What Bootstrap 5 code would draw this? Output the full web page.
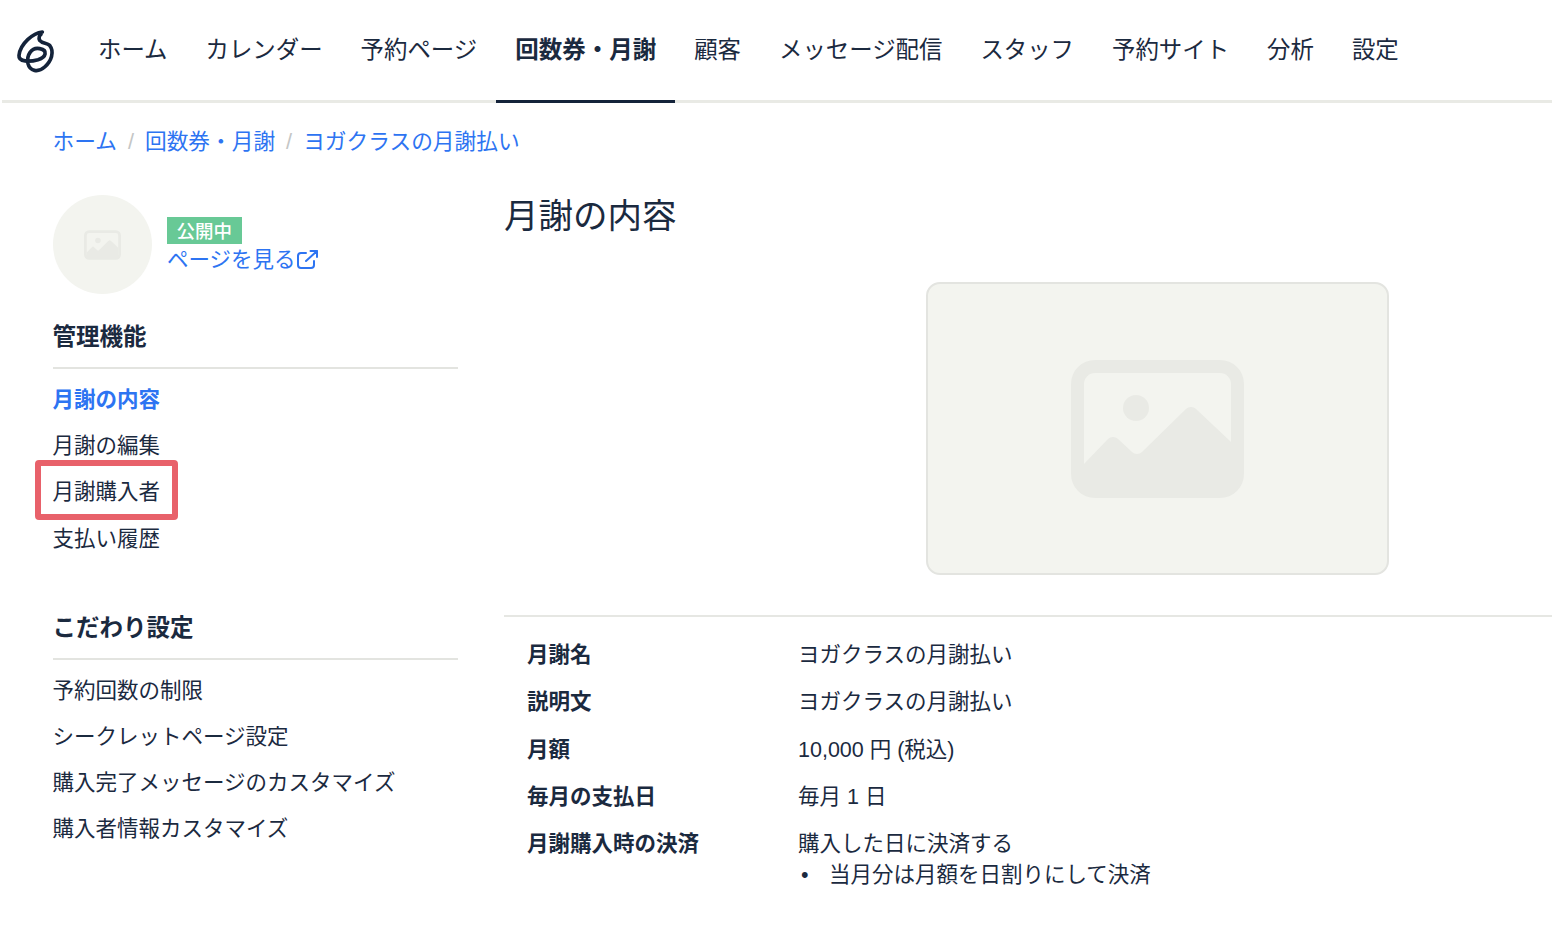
<!DOCTYPE html>
<html lang="ja">
<head>
<meta charset="utf-8">
<title>月謝の内容</title>
<link href="https://cdn.jsdelivr.net/npm/bootstrap@5.3.0/dist/css/bootstrap.min.css" rel="stylesheet">
<style>
body{font-family:"Liberation Sans","Noto Sans CJK JP",sans-serif;color:#1b2a3f;font-size:21.5px;line-height:1.45;background:#fff;overflow-x:hidden}
a{color:#2d74f2;text-decoration:none}
.topbar{height:103px;margin-left:2px;padding:0;border-bottom:3px solid #e9eae5;align-items:stretch;flex-wrap:nowrap;justify-content:flex-start}
.logo-box{width:77px;padding:26.7px 0 0 11.300px;flex:none}
.topnav{flex-wrap:nowrap}
.topnav .nav-link{color:#1b2a3f;font-size:23.42px;padding:0 19px;height:103px;line-height:101px;margin-bottom:-3px;white-space:nowrap}
.topnav .nav-link.active{font-weight:700;font-size:23.5px;border-bottom:3px solid #14233a;color:#1b2a3f}
.page-wrap{padding:0 0 0 52.5px}
.crumbs{margin:23px 0 0;font-size:21.7px;line-height:32px}
.crumbs .breadcrumb-item+.breadcrumb-item{padding-left:11px}
.crumbs .breadcrumb-item+.breadcrumb-item::before{padding-right:11px;color:#c4c6c6}
.side-col{width:405.500px;flex:none;margin-right:46px}
.main-col{flex:1 1 auto;min-width:0}
.profile-row{margin-top:37px;gap:15.500px}
.avatar-disc{width:99px;height:99px;border-radius:50%;background:#f3f4ef;flex:none}
.profile-text{padding-top:2px}
.state-tag{background:#68c996;color:#fff;font-size:18.5px;font-weight:500;line-height:27px;padding:1px 9.500px 0;height:27px;border-radius:0;display:inline-block;vertical-align:top}
.view-link{line-height:28px;margin-top:-3px}
.side-head{font-size:23.5px;font-weight:700;line-height:34px;padding-bottom:13px;border-bottom:2px solid #e3e4e0;margin:26px 0 0}
.side-head.later{margin-top:49px}
.side-menu .nav-link{color:#1b2a3f;padding:0;height:46.200px;line-height:46px;font-size:21.5px}
.side-menu .nav-link.active{color:#2d74f2;font-weight:700}
.mark-box{position:absolute;left:-17.500px;top:-9px;width:143px;height:60px;border:6.5px solid #e8616a;border-radius:4px;pointer-events:none}
.main-title{font-size:34.5px;font-weight:400;line-height:50px;margin:33px 0 0}
.photo-frame{width:463px;height:293px;background:#f3f4ef;border:2px solid #e3e4e0;border-radius:14px;margin:41px 0 0 422px}
.spec-rule{border-top:2px solid #e6e7e3;margin:40px 0 0;opacity:1}
.spec{margin:15px 0 0 23px}
.spec-row{min-height:47.3px;line-height:47px}
.spec-key{width:271px;flex:none;font-weight:700}
.spec-note{line-height:31px;margin:-8px 0 0;padding:0;list-style:none}
.spec-note li{display:flex}
.spec-note li::before{content:"•";width:31px;padding-left:3px;flex:none}
</style>
</head>
<body>
<nav class="navbar topbar d-flex">
  <div class="logo-box">
    <svg width="45" height="50" viewBox="40 80 135 150" fill="none" stroke="#14233a" stroke-width="11" stroke-linecap="round" stroke-linejoin="round"><path d="M128 95C100 98 62 130 58 165C56 185 90 185 115 178C140 170 145 150 120 145C95 140 80 165 85 190C90 212 115 218 135 200C155 182 165 155 150 135C142 127 128 130 120 120C116 112 120 104 124 102"/></svg>
  </div>
  <ul class="nav topnav">
    <li class="nav-item"><a class="nav-link" href="#">ホーム</a></li>
    <li class="nav-item"><a class="nav-link" href="#">カレンダー</a></li>
    <li class="nav-item"><a class="nav-link" href="#">予約ページ</a></li>
    <li class="nav-item"><a class="nav-link active" href="#">回数券・月謝</a></li>
    <li class="nav-item"><a class="nav-link" href="#">顧客</a></li>
    <li class="nav-item"><a class="nav-link" href="#">メッセージ配信</a></li>
    <li class="nav-item"><a class="nav-link" href="#">スタッフ</a></li>
    <li class="nav-item"><a class="nav-link" href="#">予約サイト</a></li>
    <li class="nav-item"><a class="nav-link" href="#">分析</a></li>
    <li class="nav-item"><a class="nav-link" href="#">設定</a></li>
  </ul>
</nav>
<div class="page-wrap">
  <ol class="breadcrumb crumbs">
    <li class="breadcrumb-item"><a href="#">ホーム</a></li>
    <li class="breadcrumb-item"><a href="#">回数券・月謝</a></li>
    <li class="breadcrumb-item"><a href="#">ヨガクラスの月謝払い</a></li>
  </ol>
  <div class="d-flex">
    <aside class="side-col">
      <div class="d-flex align-items-center profile-row">
        <div class="avatar-disc d-flex align-items-center justify-content-center">
          <svg width="37" height="30" viewBox="0 0 173 138"><use href="#pic"/></svg>
        </div>
        <div class="profile-text">
          <span class="badge state-tag">公開中</span>
          <div class="view-link"><a href="#" class="d-inline-flex align-items-center">ページを見る<svg width="23" height="21" viewBox="0 0 23 21" fill="none" stroke="#2d74f2" stroke-width="2" stroke-linecap="round" stroke-linejoin="round"><path d="M18 12v4a3 3 0 0 1-3 3H5a3 3 0 0 1-3-3V7a3 3 0 0 1 3-3h5"/><path d="M10 12 21 2M14.500 2H21v6"/></svg></a></div>
        </div>
      </div>
      <h2 class="side-head">管理機能</h2>
      <ul class="nav flex-column side-menu mt-2">
        <li class="nav-item"><a class="nav-link active" href="#">月謝の内容</a></li>
        <li class="nav-item"><a class="nav-link" href="#">月謝の編集</a></li>
        <li class="nav-item position-relative"><a class="nav-link" href="#">月謝購入者</a><span class="mark-box"></span></li>
        <li class="nav-item"><a class="nav-link" href="#">支払い履歴</a></li>
      </ul>
      <h2 class="side-head later">こだわり設定</h2>
      <ul class="nav flex-column side-menu mt-2">
        <li class="nav-item"><a class="nav-link" href="#">予約回数の制限</a></li>
        <li class="nav-item"><a class="nav-link" href="#">シークレットページ設定</a></li>
        <li class="nav-item"><a class="nav-link" href="#">購入完了メッセージのカスタマイズ</a></li>
        <li class="nav-item"><a class="nav-link" href="#">購入者情報カスタマイズ</a></li>
      </ul>
    </aside>
    <main class="main-col">
      <h1 class="main-title">月謝の内容</h1>
      <div class="photo-frame d-flex align-items-center justify-content-center">
        <svg width="173" height="138" viewBox="0 0 173 138"><defs><g id="pic" fill="#e9eae5"><path fill-rule="evenodd" d="M24 0h125a24 24 0 0 1 24 24v90a24 24 0 0 1-24 24H24a24 24 0 0 1-24-24V24A24 24 0 0 1 24 0Zm0 13a11 11 0 0 0-11 11v90a11 11 0 0 0 11 11h125a11 11 0 0 0 11-11V24a11 11 0 0 0-11-11Z"/><circle cx="65" cy="48" r="13"/><path d="M13 104 37 79a7 7 0 0 1 10 0l14 13a7 7 0 0 0 10 0l44-43a7 7 0 0 1 10 0l35 33v50H13Z"/></g></defs><use href="#pic"/></svg>
      </div>
      <hr class="spec-rule">
      <div class="spec">
        <div class="d-flex spec-row"><div class="spec-key">月謝名</div><div>ヨガクラスの月謝払い</div></div>
        <div class="d-flex spec-row"><div class="spec-key">説明文</div><div>ヨガクラスの月謝払い</div></div>
        <div class="d-flex spec-row"><div class="spec-key">月額</div><div>10,000 円 (税込)</div></div>
        <div class="d-flex spec-row"><div class="spec-key">毎月の支払日</div><div>毎月 1 日</div></div>
        <div class="d-flex spec-row"><div class="spec-key">月謝購入時の決済</div><div>購入した日に決済する<ul class="spec-note"><li>当月分は月額を日割りにして決済</li></ul></div></div>
      </div>
    </main>
  </div>
</div>
</body>
</html>
